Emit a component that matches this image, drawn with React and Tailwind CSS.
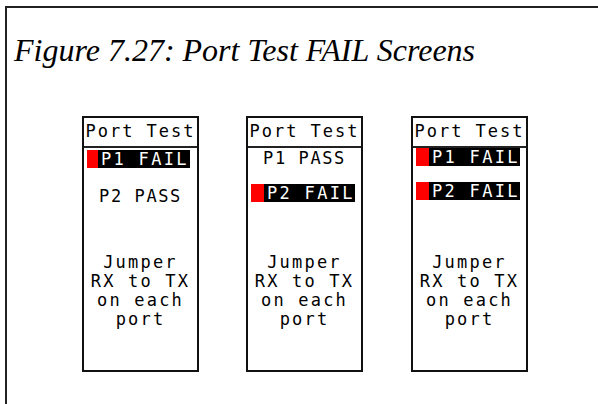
export default function App() {
  const pix = { fontFamily: '"DejaVu Sans Mono", monospace' };
  const Bar = ({ label, mt, red, black }) => (
    <div className={`flex h-[18px] pl-[3px] ${mt}`}>
      <div className={`${red} bg-[#ff0000]`} />
      <div className={`${black} bg-black pl-[3px] text-[17px] leading-[18px] tracking-[2.3px] text-white`}>{label}</div>
    </div>
  );
  const Plain = ({ label, mt }) => (
    <div className={`h-[18px] text-center text-[17px] leading-[18px] tracking-[1.6px] text-black ${mt}`}>{label}</div>
  );
  const Footer = () => (
    <div className="flex flex-col items-center text-[17px] leading-[19px] tracking-[2.2px] text-black">
      <div>Jumper</div>
      <div>RX to TX</div>
      <div>on each</div>
      <div>port</div>
    </div>
  );
  const Panel = ({ children, ml }) => (
    <div className={`flex h-[256px] w-[117px] flex-col border-2 border-[#111] bg-white ${ml}`} style={pix}>
      <div className="h-[30px] border-b-2 border-[#222] text-center text-[17px] leading-[27px] tracking-[2px] text-black">Port Test</div>
      <div className="h-[105px]">{children}</div>
      <Footer />
    </div>
  );
  return (
    <div className="h-[404px] w-[598px] overflow-hidden bg-white">
      <div className="ml-[5px] mt-[6px] h-[398px] border-l-2 border-t-2 border-[#222]">
        <div
          className="pl-[7px] pt-[24px] text-[32px] italic leading-[36px] text-black"
          style={{ fontFamily: '"Liberation Serif", serif' }}
        >
          Figure 7.27: Port Test FAIL Screens
        </div>
        <div className="mt-[48px] flex items-start">
          <Panel ml="ml-[75px]">
            <Bar label="P1 FAIL" mt="mt-[2px]" red="w-[11px]" black="w-[92px]" />
            <Plain label="P2 PASS" mt="mt-[19px]" />
          </Panel>
          <Panel ml="ml-[47px]">
            <Plain label="P1 PASS" mt="mt-[1px]" />
            <Bar label="P2 FAIL" mt="mt-[17px]" red="w-[13px]" black="w-[91px]" />
          </Panel>
          <Panel ml="ml-[48px]">
            <Bar label="P1 FAIL" mt="mt-[0px]" red="w-[13px]" black="w-[91px]" />
            <Bar label="P2 FAIL" mt="mt-[16px]" red="w-[13px]" black="w-[91px]" />
          </Panel>
        </div>
      </div>
    </div>
  );
}
